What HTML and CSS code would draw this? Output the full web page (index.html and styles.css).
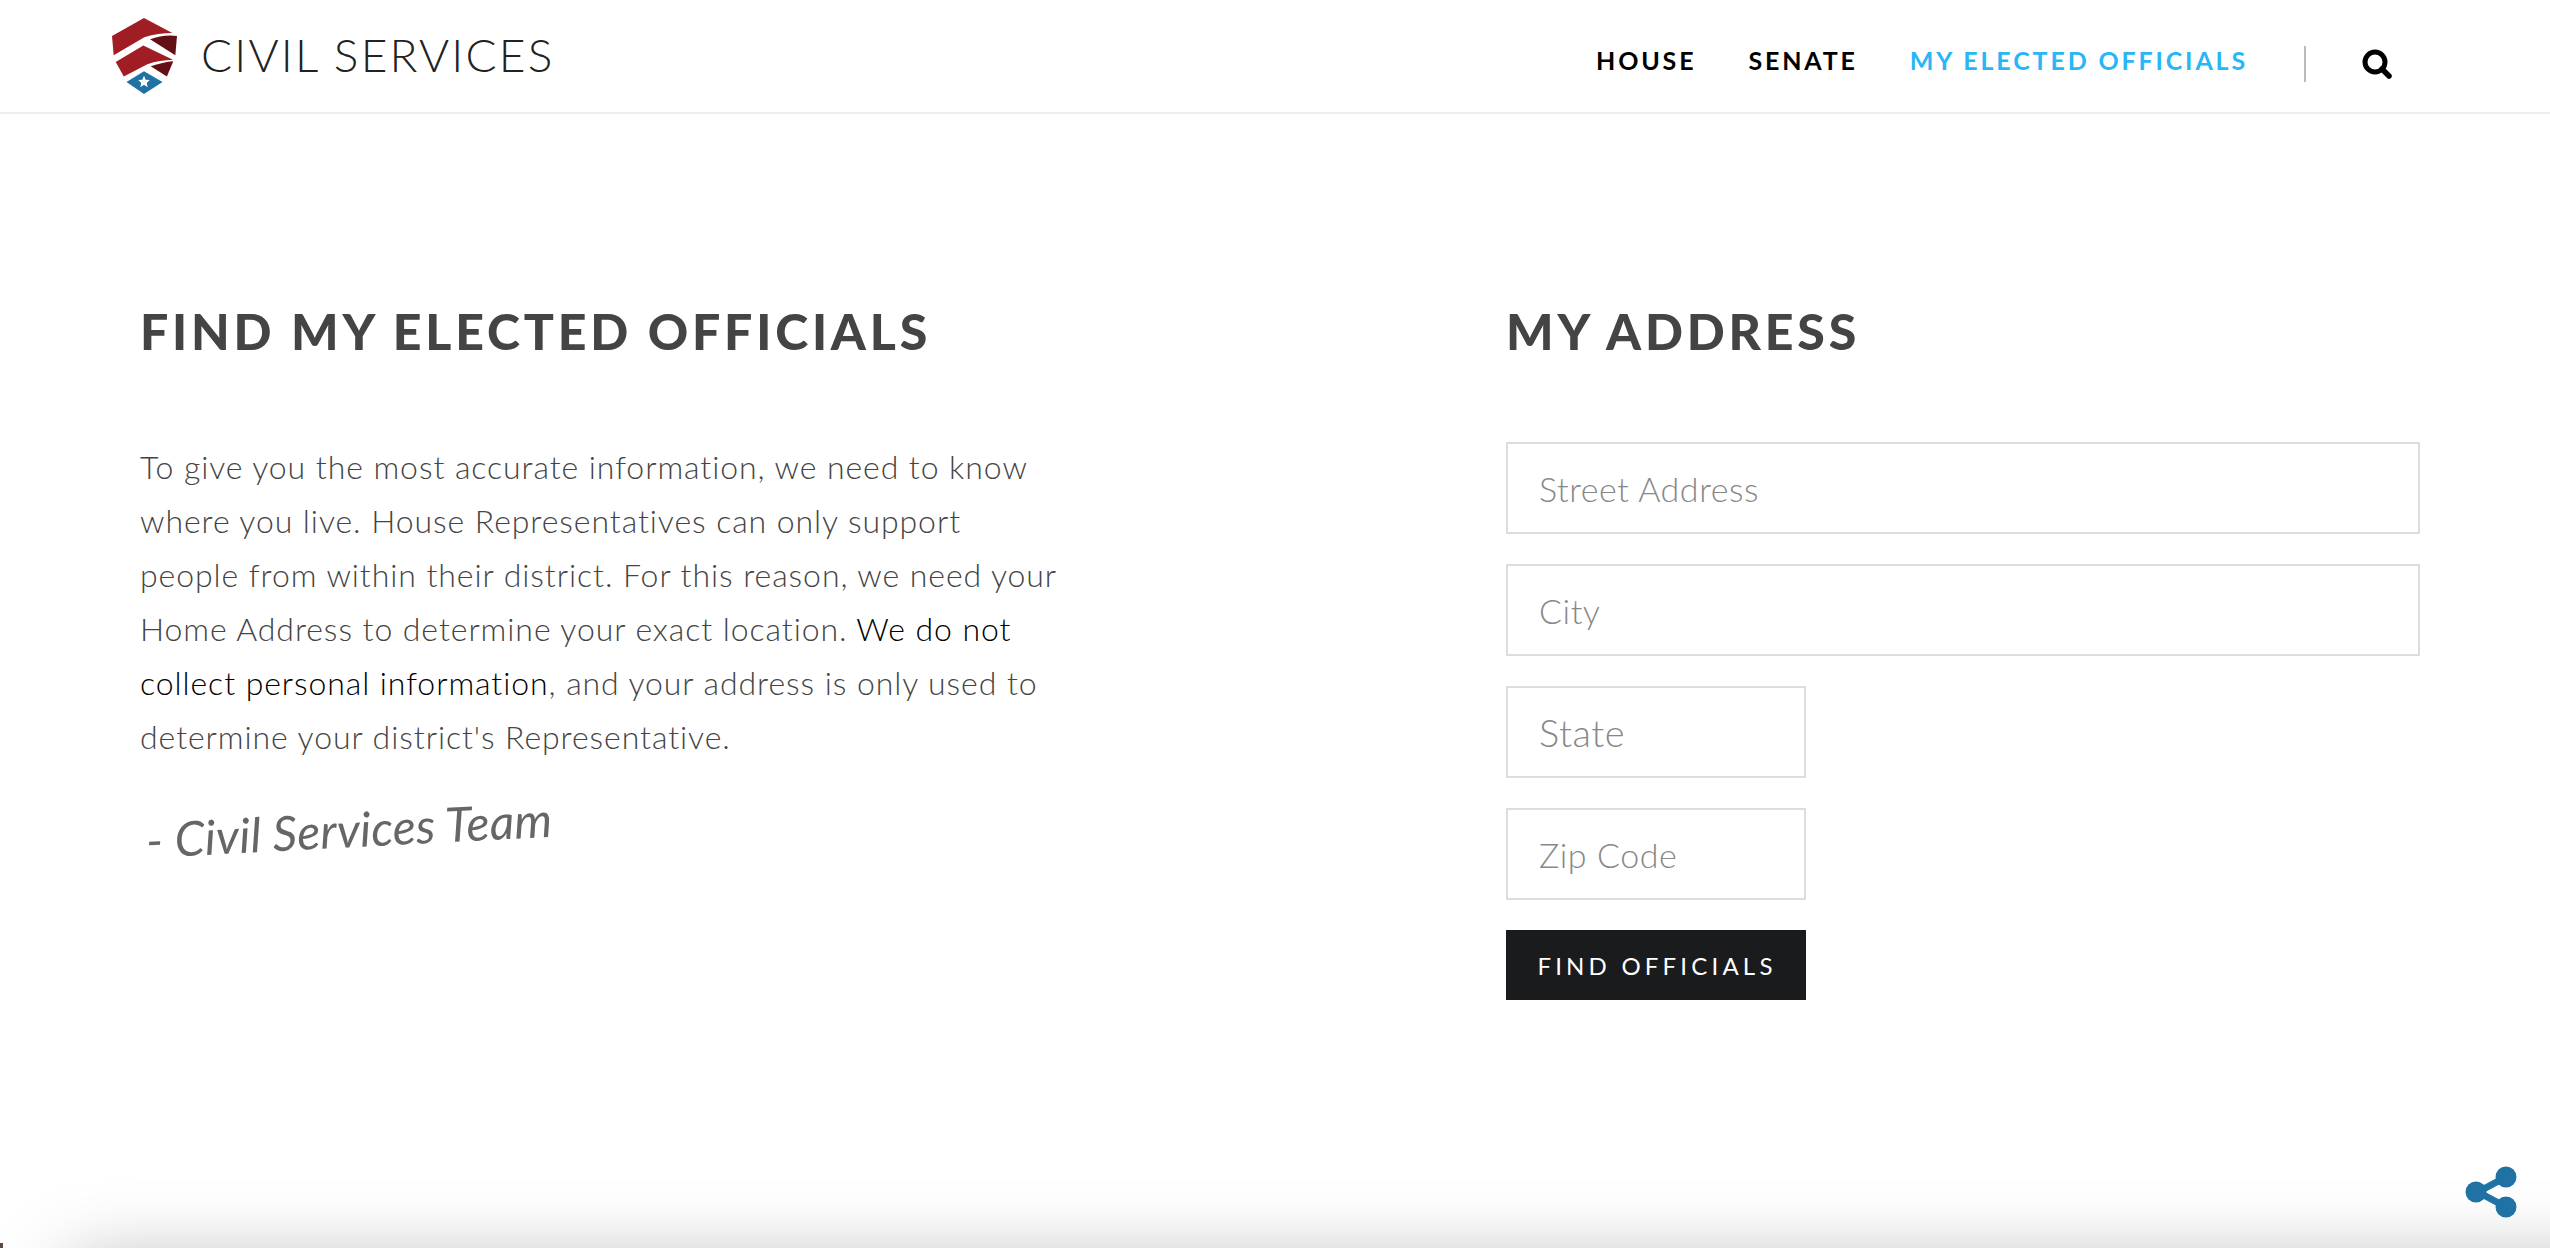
FILE: index.html
```html
<!DOCTYPE html>
<html>
<head>
    <title>Civil Services - Find My Elected Officials</title>
    <link rel="stylesheet" href="styles.css">
</head>
<body>
    <header class="site-header">
        <a class="brand" href="#">
            <svg class="brand-logo" viewBox="67 55 193 225">
                <path fill="#a01d24" d="M162 55 L67 108 L72 165 L163 112 C190 102 220 99 246 99 Z"/>
                <path fill="#640f13" d="M180 118 C205 108 235 104 260 108 L255 165 Z"/>
                <path fill="#a01d24" d="M160 136 L78 185 L102 228 L172 192 C195 184 225 180 248 179 Z"/>
                <path fill="#640f13" d="M182 198 C205 190 230 184 249 183 L230 228 Z"/>
                <path fill="#1f72a3" d="M162 213 L217 245 L162 280 L110 245 Z"/>
                <path fill="#fff" d="M162 226 L167 238 L179 239 L170 248 L173 260 L162 253 L151 260 L154 248 L145 239 L157 238 Z"/>
            </svg>
            <span class="brand-name">CIVIL SERVICES</span>
        </a>
        <nav class="main-nav">
            <a href="#">HOUSE</a>
            <a href="#">SENATE</a>
            <a href="#" class="active">MY ELECTED OFFICIALS</a>
            <span class="nav-divider"></span>
            <svg class="search-icon" viewBox="0 0 30 30">
                <circle cx="13" cy="13" r="10" fill="none" stroke="#000" stroke-width="5"/>
                <path d="M20 20 L27 27" stroke="#000" stroke-width="5.5" stroke-linecap="round"/>
            </svg>
        </nav>
    </header>

    <main class="content">
        <section class="intro">
            <h2>FIND MY ELECTED OFFICIALS</h2>
            <p>To give you the most accurate information, we need to know where you live. House Representatives can only support people from within their district. For this reason, we need your Home Address to determine your exact location. <span class="strong">We do not</span> <span class="strong">collect personal information</span>, and your address is only used to determine your district's Representative.</p>
            <div class="signature">- Civil Services Team</div>
        </section>

        <section class="address">
            <h2>MY ADDRESS</h2>
            <form class="address-form">
                <input type="text" placeholder="Street Address">
                <input type="text" placeholder="City">
                <input type="text" class="short big" placeholder="State">
                <input type="text" class="short" placeholder="Zip Code">
                <button type="button" class="submit-btn">FIND OFFICIALS</button>
            </form>
        </section>
    </main>

    <!-- footer sits just under the fold, only its shadow shows -->
    <div class="footer-shadow"></div>
    <div class="corner-mark"></div>

    <svg class="share-icon" viewBox="0 0 52 52">
        <path d="M13 26 L41 11 M13 26 L41 41" stroke="#1f72a3" stroke-width="7" fill="none"/>
        <circle cx="41" cy="11" r="10.5" fill="#1f72a3"/>
        <circle cx="11" cy="26" r="10.5" fill="#1f72a3"/>
        <circle cx="41" cy="41" r="10.5" fill="#1f72a3"/>
    </svg>
</body>
</html>
```

FILE: styles.css
```css
html, body {
    height: 100%;
}

body {
    margin: 0;
    overflow: hidden;
    background-color: #fff;
    font-family: "Lato", "Open Sans", sans-serif;
    color: #444;
}

a {
    text-decoration: none;
}

.site-header {
    display: flex;
    align-items: flex-start;
    justify-content: space-between;
    box-sizing: border-box;
    height: 114px;
    padding: 18px 130px 0 112px;
    border-bottom: 2px solid #eee;
}

.brand {
    display: flex;
    align-items: flex-start;
    gap: 24px;
}

.brand-logo {
    width: 65px;
    height: 76px;
}

.brand-name {
    margin-top: 9px;
    font-size: 46px;
    line-height: 56px;
    font-weight: 300;
    letter-spacing: 2.2px;
    color: #222;
}

.main-nav {
    display: flex;
    align-items: center;
    height: 92px;
    padding-right: 28px;
}

.main-nav a {
    margin-right: 52px;
    margin-bottom: 8px;
    font-size: 25px;
    font-weight: 700;
    letter-spacing: 2.85px;
    color: #000;
}

.main-nav a.active {
    color: #29b6f6;
    margin-right: 56px;
}

.nav-divider {
    width: 2px;
    height: 36px;
    margin-right: 56px;
    background-color: #bbb;
}

.search-icon {
    width: 30px;
    height: 30px;
}

.content {
    display: flex;
    padding: 187px 130px 0 140px;
}

.intro {
    width: 1366px;
}

.address {
    flex: 1;
}

h2 {
    margin: 0;
    font-size: 50px;
    line-height: 60px;
    font-weight: 900;
    letter-spacing: 3.8px;
    color: #444;
}

.intro p {
    width: 924px;
    margin: 79px 0 0;
    font-size: 32px;
    line-height: 54px;
    font-weight: 300;
    letter-spacing: 0.93px;
    color: #444;
}

.strong {
    font-weight: 300;
    color: #000;
}

.signature {
    width: 420px;
    margin: 46px 0 0 6px;
    font-size: 48px;
    line-height: 60px;
    font-style: italic;
    font-weight: 400;
    letter-spacing: 0.2px;
    color: #666;
    white-space: nowrap;
    transform: rotate(-3deg);
    transform-origin: left center;
}

.address-form {
    display: flex;
    flex-direction: column;
    align-items: flex-start;
    gap: 30px;
    margin-top: 81px;
}

.address-form input {
    box-sizing: border-box;
    width: 100%;
    height: 92px;
    padding: 0 31px;
    border: 2px solid #ddd;
    border-radius: 0;
    outline: none;
    font-family: inherit;
    font-size: 34px;
    font-weight: 300;
    letter-spacing: 0.55px;
    color: #333;
}

.address-form input::placeholder {
    color: #888;
    opacity: 1;
}

.address-form input.short {
    width: 300px;
}

.address-form input.big {
    font-size: 38px;
}

.submit-btn {
    width: 300px;
    height: 70px;
    padding: 0 0 0 2px;
    border: none;
    background-color: #1a1b1d;
    font-family: inherit;
    font-size: 24px;
    font-weight: 400;
    letter-spacing: 4.2px;
    color: #fff;
}

.footer-shadow {
    position: fixed;
    left: 70px;
    right: -100px;
    top: 1268px;
    height: 100px;
    box-shadow: 0 0 80px rgba(0, 0, 0, 0.35);
}

.corner-mark {
    position: fixed;
    left: 0;
    top: 1243px;
    width: 3px;
    height: 5px;
    background-color: #5a4a40;
}

.share-icon {
    position: fixed;
    left: 2465px;
    top: 1166px;
    width: 52px;
    height: 52px;
}
```
